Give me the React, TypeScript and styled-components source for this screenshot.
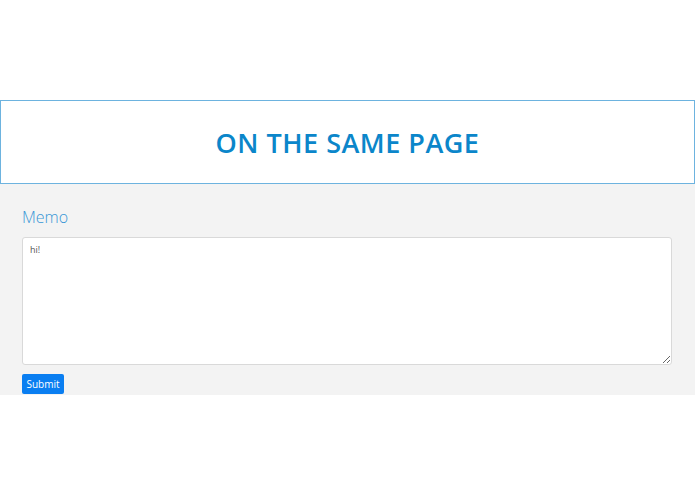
import React, {useState} from 'react';
import styled, {createGlobalStyle} from 'styled-components';

const GlobalStyle = createGlobalStyle`
body {
margin: 0;
background-color: white;
font-family: "Open Sans", "Noto Sans", sans-serif;
}
`;

const Page = styled.div`
padding-top: 100px;
`;

const Header = styled.header`
height: 82px;
border: 1px solid #6db3df;
display: flex;
align-items: center;
justify-content: center;
background-color: white;
`;

const Title = styled.h1`
margin: 0;
font-size: 27px;
font-weight: 600;
letter-spacing: 0.5px;
color: #0b86ca;
`;

const Section = styled.section`
background-color: #f3f3f3;
padding: 22px 23px 1px 22px;
display: flex;
flex-direction: column;
align-items: flex-start;
`;

const Label = styled.div`
font-size: 16px;
font-weight: 300;
color: #3796d6;
line-height: 22px;
margin-bottom: 9px;
`;

const TextArea = styled.textarea`
display: block;
width: 100%;
height: 128px;
box-sizing: border-box;
border: 1px solid #d9d9d9;
border-radius: 3px;
background-color: white;
padding: 5px 7px;
font-family: "Open Sans", "Noto Sans", sans-serif;
font-size: 9px;
color: #555;
outline: none;
resize: vertical;
`;

const Button = styled.button`
margin-top: 9px;
background-color: #0a7ef1;
border: none;
border-radius: 2px;
color: white;
font-family: "Open Sans", "Noto Sans", sans-serif;
font-size: 10px;
padding: 0;
height: 20px;
width: 42px;
cursor: pointer;
`;

const App = () => {
    const [memo, setMemo] = useState('hi!');

    return (
        <Page>
            <GlobalStyle/>
            <Header>
                <Title>ON THE SAME PAGE</Title>
            </Header>
            <Section>
                <Label>Memo</Label>
                <TextArea
                value={memo}
                onChange={(e) => setMemo(e.target.value)}/>
                <Button type={'button'}>Submit</Button>
            </Section>
        </Page>
    )
}

export default App;
